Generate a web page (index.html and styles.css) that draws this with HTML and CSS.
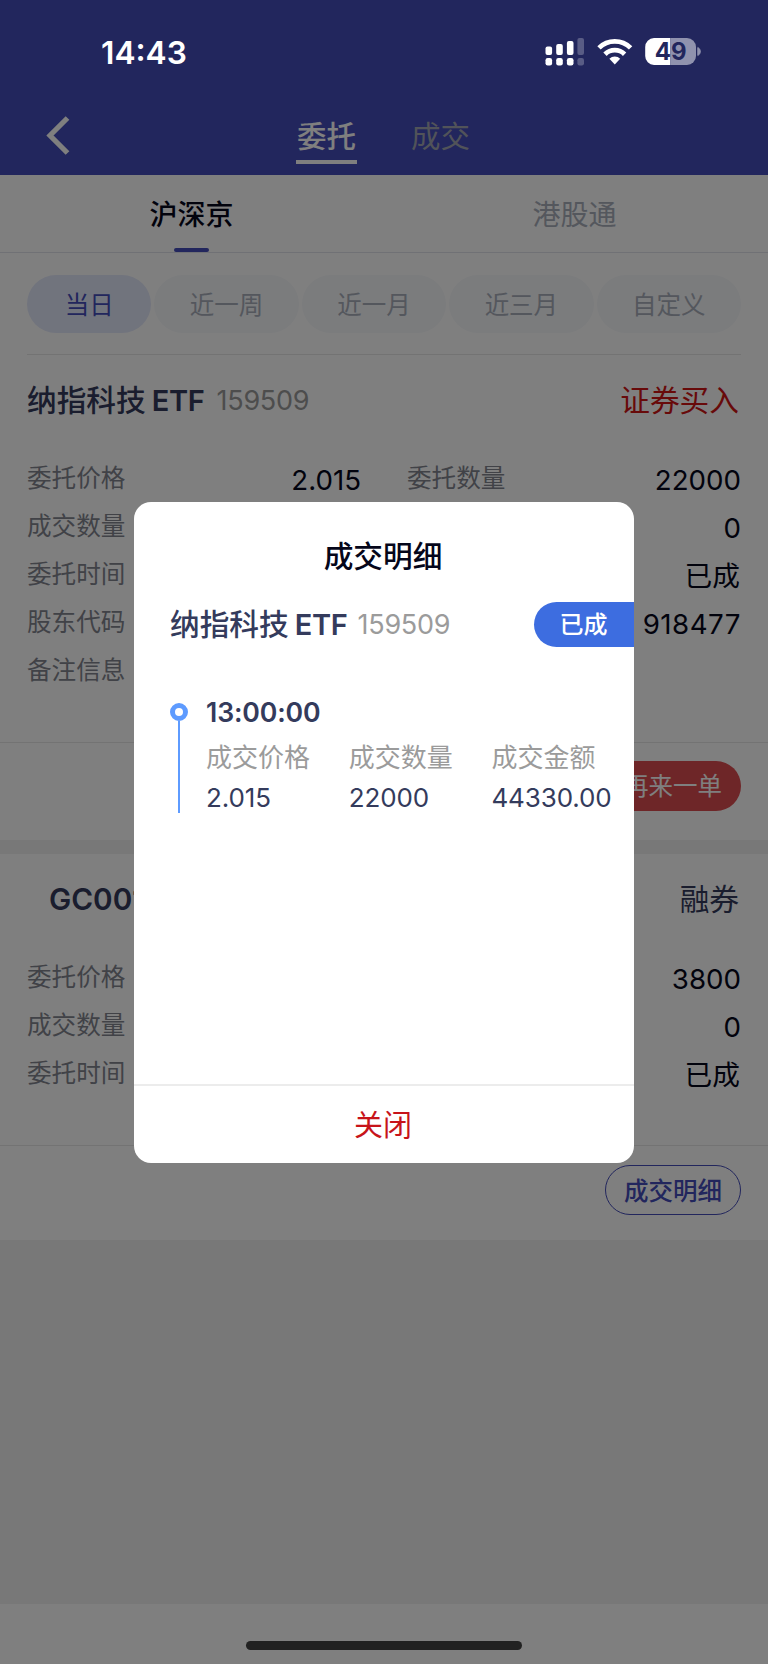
FILE: index.html
```
<!DOCTYPE html>
<html lang="zh-CN">
  <head>
    <meta charset="utf-8">
    <meta name="viewport" content="width=device-width">
    <title>委托</title>
    <link rel="stylesheet" href="styles.css">
  </head>
  <body>

    <div class="screen">

      <header class="header">
        <div class="navbar">
          <svg class="back" width="24" height="40" viewBox="0 0 24 40">
            <path d="M21.5 2 L4 19.5 L21.5 37" fill="none" stroke="#fff" stroke-width="5.2"/>
          </svg>
          <div class="nav-tabs">
            <span class="nav-tab active">委托</span>
            <span class="nav-tab">成交</span>
          </div>
        </div>
      </header>

      <nav class="markets">
        <div class="market active"><span>沪深京</span></div>
        <div class="market"><span>港股通</span></div>
      </nav>

      <div class="filters">
        <span class="chip active">当日</span>
        <span class="chip">近一周</span>
        <span class="chip">近一月</span>
        <span class="chip">近三月</span>
        <span class="chip">自定义</span>
      </div>

      <section class="card">
        <div class="card-head">
          <span class="name">纳指科技<b>ETF</b></span>
          <span class="code">159509</span>
          <span class="side buy">证券买入</span>
        </div>
        <div class="rows">
          <div class="cell"><label>委托价格</label><span>2.015</span></div>
          <div class="cell"><label>委托数量</label><span>22000</span></div>
          <div class="cell"><label>成交数量</label></div>
          <div class="cell end"><span>0</span></div>
          <div class="cell"><label>委托时间</label></div>
          <div class="cell end"><span class="zh">已成</span></div>
          <div class="cell"><label>股东代码</label></div>
          <div class="cell end"><span class="account">918477</span></div>
          <div class="cell"><label>备注信息</label></div>
        </div>
        <div class="actions">
          <span class="btn btn-red">再来一单</span>
        </div>
      </section>

      <section class="card last">
        <div class="card-head">
          <span class="name indent">GC001</span>
          <span class="side">融券</span>
        </div>
        <div class="rows">
          <div class="cell"><label>委托价格</label></div>
          <div class="cell end"><span>3800</span></div>
          <div class="cell"><label>成交数量</label></div>
          <div class="cell end"><span>0</span></div>
          <div class="cell"><label>委托时间</label></div>
          <div class="cell end"><span class="zh">已成</span></div>
        </div>
        <div class="actions">
          <span class="btn btn-line">成交明细</span>
        </div>
      </section>

      <div class="safe-area"></div>
    </div>

    <!-- dialog -->
    <div class="mask">
      <div class="dialog">
        <h2 class="dialog-title">成交明细</h2>
        <div class="dialog-head">
          <span class="name">纳指科技<b>ETF</b></span>
          <span class="code">159509</span>
          <span class="status">已成</span>
        </div>
        <div class="timeline">
          <div class="track"><i class="dot"></i><i class="line"></i></div>
          <div class="deal">
            <div class="time">13:00:00</div>
            <div class="deal-grid">
              <label>成交价格</label><label>成交数量</label><label>成交金额</label>
              <span>2.015</span><span>22000</span><span>44330.00</span>
            </div>
          </div>
        </div>
        <div class="dialog-close">关闭</div>
      </div>
    </div>

    <!-- system bars stay above the mask -->
    <div class="statusbar">
      <span class="clock">14:43</span>
      <svg class="sys-icons" width="160" height="30" viewBox="0 0 160 30">
        <g fill="#fff">
          <rect x="0.5" y="9.5" width="6.6" height="8.5" rx="2"/>
          <rect x="11.2" y="7" width="6.6" height="11" rx="2"/>
          <rect x="21.9" y="4" width="6.6" height="14" rx="2"/>
          <rect x="0.5" y="21" width="6.6" height="7.5" rx="2.2"/>
          <rect x="11.2" y="21" width="6.6" height="7.5" rx="2.2"/>
          <rect x="21.9" y="21" width="6.6" height="7.5" rx="2.2"/>
          <rect x="32.4" y="1" width="6.6" height="17" rx="2" opacity=".25"/>
          <rect x="32.4" y="21" width="6.6" height="7.5" rx="2.2" opacity=".25"/>
        </g>
        <g fill="none" stroke="#fff" stroke-width="4.8">
          <path d="M54 10.9 A22.5 22.5 0 0 1 85.6 10.9"/>
          <path d="M60 17.2 A14 14 0 0 1 79.6 17.2"/>
        </g>
        <path d="M69.8 27.4 L64.4 21.8 A7.6 7.6 0 0 1 75.2 21.8 Z" fill="#fff"/>
        <path d="M109 1 H125.2 V28 H109 A9 9 0 0 1 100.2 19 V10 A9 9 0 0 1 109 1 Z" fill="#fff"/>
        <path d="M125.2 1 H142 A9 9 0 0 1 151 10 V19 A9 9 0 0 1 142 28 H125.2 Z" fill="#9092ae"/>
        <path d="M152.8 10.5 A4.4 4.4 0 0 1 152.8 18.5 Z" fill="#9092ae" stroke="#9092ae"/>
        <text x="125.6" y="23" class="battery-text" text-anchor="middle">49</text>
      </svg>
    </div>
    <div class="home-bar"></div>

  </body>
</html>
```

FILE: styles.css
```
* {
  box-sizing: border-box;
}

body {
  margin: 0;
  background-color: #fff;
  font-family: Inter, "Noto Sans CJK SC", sans-serif;
  overflow: hidden;
}

.screen {
  display: flex;
  flex-direction: column;
  height: 1664px;
  background-color: #f1f1f1;
}

/* header */
.header {
  height: 174.5px;
  padding-top: 96px;
  background-color: #444cba;
}

.navbar {
  display: flex;
  height: 78px;
  padding-left: 46px;
}

.back {
  margin-top: 20px;
}

.nav-tabs {
  display: flex;
  gap: 53px;
  margin-left: 226px;
  padding-top: 14px;
}

.nav-tab {
  width: 61px;
  height: 54px;
  font-size: 29.5px;
  line-height: 53px;
  text-align: center;
  color: #a2a6b2;
}

.nav-tab.active {
  font-weight: 500;
  color: #fff;
  border-bottom: 4px solid #fff;
}

/* market tabs */
.markets {
  display: flex;
  height: 78.5px;
  padding-right: 2px;
  background-color: #fff;
  border-bottom: 1px solid #e0e2ea;
}

.market {
  flex: 1;
  display: flex;
  flex-direction: column;
  align-items: center;
  font-size: 28px;
  line-height: 80px;
  color: #a9aebb;
}

.market.active {
  font-weight: 500;
  color: #05061a;
}

.market.active::after {
  content: "";
  width: 35px;
  height: 5px;
  margin-top: -7px;
  border-radius: 2px;
  background-color: #444cba;
}

/* date filters */
.filters {
  display: flex;
  gap: 3px;
  height: 102px;
  padding: 22px 27px 0;
  background-color: #fff;
}

.filters::after {
  content: "";
  position: absolute;
  left: 27px;
  right: 27px;
  top: 354px;
  height: 1px;
  background-color: #e6e6e6;
}

.chip {
  flex: 144;
  height: 58px;
  border-radius: 29px;
  background-color: #f6f8fb;
  font-size: 24.5px;
  line-height: 60px;
  text-align: center;
  color: #a9aebb;
}

.chip.active {
  flex: 124;
  background-color: #e3e8fb;
  color: #444cba;
}

/* order cards */
.card {
  margin-bottom: 14px;
  background-color: #fff;
}

.card.last {
  margin-bottom: 0;
}

.card-head {
  display: flex;
  align-items: center;
  height: 90px;
  padding: 0 28px 0 27px;
}

.name {
  font-size: 29.7px;
  line-height: 44px;
  font-weight: 500;
  color: #343b5c;
}

.name b {
  margin-left: 6px;
  font-size: 29px;
  font-weight: 600;
  letter-spacing: -0.3px;
}

.name.indent {
  margin-left: 22px;
  font-weight: 600;
}

.code {
  margin-left: 12px;
  font-size: 27px;
  letter-spacing: -0.3px;
  color: #9b9b9b;
}

.side {
  margin-left: auto;
  padding-right: 1px;
  font-size: 29.7px;
  line-height: 44px;
  color: #343b5c;
}

.buy {
  color: #d01414;
}

.rows {
  display: grid;
  grid-template-columns: 1fr 1fr;
  column-gap: 46px;
  padding: 9px 27px 48px;
}

.cell {
  display: flex;
  justify-content: space-between;
  height: 48px;
  line-height: 48px;
}

.cell.end {
  justify-content: flex-end;
}

.cell label {
  font-size: 24.6px;
  line-height: 49px;
  color: #82858f;
}

.cell span {
  padding-top: 2px;
  font-size: 27.7px;
  color: #05061a;
}

.cell .zh {
  padding-right: 1px;
}

.cell .account {
  letter-spacing: 0.5px;
}

.actions {
  display: flex;
  justify-content: flex-end;
  height: 98px;
  padding: 18px 27px 0;
  border-top: 1px solid #e6e6e6;
}

.last .actions {
  height: 95px;
}

.btn {
  width: 136px;
  height: 50px;
  border-radius: 25px;
  font-size: 24.5px;
  line-height: 50px;
  text-align: center;
}

.btn-red {
  background-color: #dc4c50;
  color: #fff;
}

.btn-line {
  border: 1px solid #444cba;
  color: #444cba;
  font-weight: 500;
}

.last .btn {
  margin-top: 1px;
}

.safe-area {
  height: 60px;
  margin-top: auto;
  background-color: #fff;
}

/* dialog */
.mask {
  position: absolute;
  top: 0;
  left: 0;
  width: 100%;
  height: 1664px;
  display: flex;
  align-items: center;
  justify-content: center;
  background-color: rgba(0, 0, 0, 0.5);
}

.dialog {
  display: flex;
  flex-direction: column;
  width: 500px;
  height: 661px;
  border-radius: 17px;
  background-color: #fff;
  overflow: hidden;
}

.dialog-title {
  margin: 32px 0 0;
  padding-right: 2px;
  font-size: 29.7px;
  line-height: 44px;
  font-weight: 500;
  text-align: center;
  color: #05061a;
}

.dialog-head {
  display: flex;
  align-items: center;
  height: 45px;
  margin-top: 24px;
  padding-left: 36px;
}

.dialog-head .code {
  margin-left: 10px;
}

.status {
  width: 100px;
  height: 45px;
  margin-left: auto;
  padding-right: 1px;
  border-radius: 23px 0 0 23px;
  background-color: #3d6de0;
  font-size: 24px;
  line-height: 45px;
  font-weight: 500;
  text-align: center;
  color: #fff;
}

.timeline {
  display: flex;
  flex: 1;
  padding: 46px 0 0 36px;
}

.track {
  display: flex;
  flex-direction: column;
  align-items: center;
  width: 18px;
  padding-top: 10px;
}

.dot {
  width: 18px;
  height: 18px;
  border: 5px solid #5e9bff;
  border-radius: 50%;
}

.line {
  width: 2px;
  height: 92px;
  background-color: #5e9bff;
}

.deal {
  margin-left: 18px;
}

.time {
  font-size: 26.7px;
  line-height: 38px;
  font-weight: 600;
  letter-spacing: -0.15px;
  color: #343b5c;
}

.deal-grid {
  display: grid;
  grid-template-columns: repeat(3, 142.7px);
  margin-top: 7px;
  font-size: 26px;
  line-height: 40px;
  color: #343b5c;
}

.deal-grid label {
  color: #9b9b9b;
}

.deal-grid span {
  letter-spacing: -0.1px;
}

.dialog-close {
  height: 79px;
  padding-right: 2px;
  border-top: 2px solid #ececec;
  font-size: 29px;
  line-height: 80px;
  text-align: center;
  color: #c7141a;
}

/* system bars */
.statusbar {
  position: absolute;
  top: 0;
  left: 0;
  width: 100%;
  height: 96px;
  display: flex;
  justify-content: space-between;
  padding: 37px 63px 0 101px;
  color: #fff;
}

.clock {
  font-size: 31.7px;
  line-height: 31px;
  font-weight: 600;
}

.battery-text {
  font-size: 24px;
  font-weight: 700;
  fill: #22265d;
}

.home-bar {
  position: absolute;
  left: 246px;
  top: 1641px;
  width: 276px;
  height: 9px;
  border-radius: 5px;
  background-color: #212121;
}
```
